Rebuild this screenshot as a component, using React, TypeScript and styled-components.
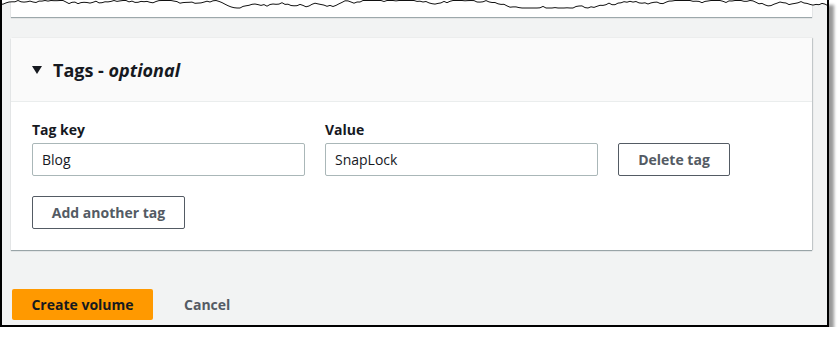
import React from "react";
import styled, { createGlobalStyle } from "styled-components";

const GlobalStyle = createGlobalStyle`
  html, body {
    margin: 0;
    padding: 0;
    background: #ffffff;
  }
  body {
    font-family: "Open Sans", "Noto Sans", Arial, sans-serif;
    color: #16191f;
  }
`;

// jagged torn-paper line along the top of the screenshot
const tearPoints = (() => {
  const pts: string[] = [];
  let seed = 7;
  const rnd = () => {
    seed = (seed * 9301 + 49297) % 233280;
    return seed / 233280;
  };
  let y = 4;
  for (let x = 0; x <= 830; x += 3) {
    y += (rnd() - 0.5) * 3.4;
    if (y < 0.5) y = 0.5;
    if (y > 8) y = 8;
    pts.push(`${x},${y.toFixed(1)}`);
  }
  return pts;
})();

export default function App() {
  return (
    <>
      <GlobalStyle />
      <Shot>
        <Tear width="830" height="10" viewBox="0 0 830 10">
          <polygon points={`0,0 ${tearPoints.join(" ")} 830,0`} fill="#ffffff" />
          <polyline points={tearPoints.join(" ")} fill="none" stroke="#111" strokeWidth="1" />
        </Tear>
        <Page>
          <PrevCard />
          <Card>
            <CardHeader>
              <Caret width="10" height="8" viewBox="0 0 10 8">
                <polygon points="0,0 10,0 5,8" fill="#16191f" />
              </Caret>
              <Title>
                Tags - <em>optional</em>
              </Title>
            </CardHeader>
            <CardBody>
              <TagRow>
                <Field>
                  <Label>Tag key</Label>
                  <Input defaultValue="Blog" />
                </Field>
                <Field>
                  <Label>Value</Label>
                  <Input defaultValue="SnapLock" />
                </Field>
                <Button $width={112}>Delete tag</Button>
              </TagRow>
              <Button $width={153}>Add another tag</Button>
            </CardBody>
          </Card>
          <Actions>
            <PrimaryButton>Create volume</PrimaryButton>
            <LinkButton>Cancel</LinkButton>
          </Actions>
        </Page>
      </Shot>
    </>
  );
}

const Shot = styled.div`
  position: relative;
  width: 825px;
  height: 325px;
  border: 2px solid #000;
  border-top: none;
  background: #f2f3f3;
  box-shadow: 5px 5px 3px rgba(0, 0, 0, 0.4);
  overflow: hidden;
`;

const Tear = styled.svg`
  position: absolute;
  top: 0;
  left: -2px;
  display: block;
`;

const Page = styled.div`
  display: flex;
  flex-direction: column;
  padding: 0 15px 0 9px;
`;

const PrevCard = styled.div`
  height: 17px;
  background: #fff;
  box-shadow: 0 1px 1px rgba(0, 28, 36, 0.35);
`;

const Card = styled.section`
  margin-top: 21px;
  background: #fff;
  box-shadow: 0 1px 1px rgba(0, 28, 36, 0.35), 1px 0 1px rgba(0, 28, 36, 0.15);
`;

const CardHeader = styled.div`
  display: flex;
  align-items: center;
  gap: 11px;
  height: 63px;
  padding: 0 20px 0 21px;
  background: #fafafa;
  border-bottom: 1px solid #eaeded;
`;

const Caret = styled.svg`
  display: block;
  flex: none;
`;

const Title = styled.h2`
  margin: 0;
  font-size: 18px;
  line-height: 22px;
  font-weight: 700;
  color: #16191f;

  em {
    font-weight: 700;
  }
`;

const CardBody = styled.div`
  display: flex;
  flex-direction: column;
  align-items: flex-start;
  gap: 20px;
  padding: 18px 21px 21px;
`;

const TagRow = styled.div`
  display: flex;
  align-items: flex-end;
  gap: 20px;
`;

const Field = styled.div`
  display: flex;
  flex-direction: column;
  gap: 3px;
  width: 273px;
`;

const Label = styled.label`
  font-size: 14px;
  line-height: 20px;
  font-weight: 700;
  color: #16191f;
`;

const Input = styled.input`
  box-sizing: border-box;
  height: 33px;
  width: 100%;
  padding: 0 9px;
  border: 1px solid #aab7b8;
  border-radius: 2px;
  font-family: inherit;
  font-size: 14px;
  color: #16191f;
  background: #fff;
  outline: none;
`;

const Button = styled.button<{ $width: number }>`
  box-sizing: border-box;
  width: ${(p) => p.$width}px;
  height: 33px;
  border: 1px solid #545b64;
  border-radius: 2px;
  background: #fff;
  color: #545b64;
  font-family: inherit;
  font-size: 14px;
  font-weight: 700;
  cursor: pointer;
`;

const Actions = styled.div`
  display: flex;
  align-items: center;
  gap: 11px;
  margin-top: 39px;
  padding-left: 1px;
`;

const PrimaryButton = styled.button`
  box-sizing: border-box;
  width: 141px;
  height: 31px;
  border: none;
  border-radius: 2px;
  background: #ff9900;
  color: #16191f;
  font-family: inherit;
  font-size: 14px;
  font-weight: 700;
`;

const LinkButton = styled.button`
  border: none;
  background: transparent;
  padding: 4px 20px;
  color: #545b64;
  font-family: inherit;
  font-size: 14px;
  font-weight: 700;
`;
